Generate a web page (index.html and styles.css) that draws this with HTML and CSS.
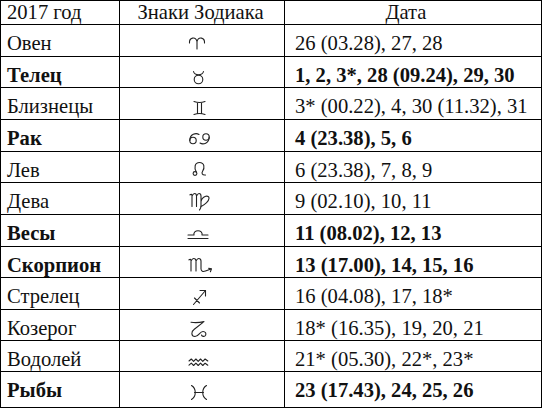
FILE: index.html
```html
<!DOCTYPE html>
<html lang="ru">
<head>
<meta charset="utf-8">
<link rel="stylesheet" href="styles.css">
</head>
<body>
<table class="zodiac">
  <colgroup>
    <col class="c-year">
    <col class="c-sign">
    <col class="c-date">
  </colgroup>
  <thead>
    <tr class="head">
      <th class="year">2017 год</th>
      <th class="signh">Знаки Зодиака</th>
      <th class="dateh">Дата</th>
    </tr>
  </thead>
  <tbody>
    <tr class="r32">
      <td class="name">Овен</td>
      <td class="sign"><svg viewBox="0 1 30 30" width="30" height="30"><path d="M5.5 19 C5 13.5 11.5 12 13 17.5 M20.5 19 C21 13.5 14.5 12 13 17.5 V25"/></svg></td>
      <td class="date">26 (03.28), 27, 28</td>
    </tr>
    <tr class="r31 bold">
      <td class="name">Телец</td>
      <td class="sign"><svg viewBox="0 1 30 30" width="30" height="30"><circle cx="14.5" cy="23.5" r="4.3"/><path d="M9.5 15.5 C10.5 19.8 18.5 19.8 19.5 15.5"/></svg></td>
      <td class="date">1, 2, 3*, 28 (09.24), 29, 30</td>
    </tr>
    <tr class="r32">
      <td class="name">Близнецы</td>
      <td class="sign"><svg viewBox="0 1 30 30" width="30" height="30"><path d="M10 14.5 Q15.5 16.5 21 14.5 M10 27.5 Q15.5 25.5 21 27.5 M13.5 15.5 V26.5 M17.5 15.5 V26.5"/></svg></td>
      <td class="date">3* (00.22), 4, 30 (11.32), 31</td>
    </tr>
    <tr class="r32 bold">
      <td class="name">Рак</td>
      <td class="sign"><svg viewBox="0 1 30 30" width="30" height="30"><circle cx="9" cy="21.5" r="3.2"/><path d="M5.8 21.5 C5.8 15 12 13.5 15 15.5"/><circle cx="22" cy="18" r="3.2"/><path d="M25.2 18 C25.2 24.5 19 26 16 24"/></svg></td>
      <td class="date">4 (23.38), 5, 6</td>
    </tr>
    <tr class="r31">
      <td class="name">Лев</td>
      <td class="sign"><svg viewBox="0 1 30 30" width="30" height="30"><circle cx="11" cy="22.5" r="1.9"/><path d="M12.3 21 C10 17 10.5 11.5 15.5 11.5 C20.5 11.5 21 17 18.5 20.5 C17.5 22 18 24.5 21.5 24"/></svg></td>
      <td class="date">6 (23.38), 7, 8, 9</td>
    </tr>
    <tr class="r32">
      <td class="name">Дева</td>
      <td class="sign"><svg viewBox="0 1 30 30" width="30" height="30"><path d="M6 12.8 Q7.6 11.6 8 13.5 V24.5 M8 14 Q9.4 11.5 10.5 11.5 Q12.5 11.5 12.5 14 V24.5 M12.5 14 Q14 11.5 15 11.5 Q17 11.5 17 14 V24 Q17 26.5 15.5 28 M17 19.5 C18.5 13.5 25.5 12.5 25 16.5 C24.5 20.5 20 23 16.5 25"/></svg></td>
      <td class="date">9 (02.10), 10, 11</td>
    </tr>
    <tr class="r32 bold">
      <td class="name">Весы</td>
      <td class="sign"><svg viewBox="0 1 30 30" width="30" height="30"><path d="M4 24.5 H24 M4 21 H10 C8.5 15.3 19.5 15.3 18 21 H24"/></svg></td>
      <td class="date">11 (08.02), 12, 13</td>
    </tr>
    <tr class="r31 bold">
      <td class="name">Скорпион</td>
      <td class="sign"><svg viewBox="0 1 30 30" width="30" height="30"><path d="M5 13.8 Q6.6 12.6 7 14.5 V25 M7 15 Q8.5 12.5 9.5 12.5 Q12 12.5 12 15 V25 M12 15 Q13.5 12.5 14.5 12.5 Q17 12.5 17 15 V23 Q17.5 26.5 21.5 25 L27 23 M24.6 22.3 L27.5 22.9 L26.4 25.8"/></svg></td>
      <td class="date">13 (17.00), 14, 15, 16</td>
    </tr>
    <tr class="r32">
      <td class="name">Стрелец</td>
      <td class="sign"><svg viewBox="0 1 30 30" width="30" height="30"><path d="M9.5 27.5 L21.5 13.5 M16 13.5 H21.5 V19 M10.5 21 L15.5 26"/></svg></td>
      <td class="date">16 (04.08), 17, 18*</td>
    </tr>
    <tr class="r31">
      <td class="name">Козерог</td>
      <td class="sign"><svg viewBox="0 1 30 30" width="30" height="30"><path d="M7 13.2 Q13 14.2 20 12.6 L10 20.5 C7 22.5 7 27.5 11 27.5 C15 27.5 15.5 22.5 19 22.5 C21.5 22.5 22.5 24.5 21.5 26.5 C20.5 28 18 27.5 17.5 26"/></svg></td>
      <td class="date">18* (16.35), 19, 20, 21</td>
    </tr>
    <tr class="r31">
      <td class="name">Водолей</td>
      <td class="sign"><svg viewBox="0 1 30 30" width="30" height="30"><path d="M5 21 L7.3 19 L9.6 21.3 L11.9 19 L14.2 21.3 L16.5 19 L18.8 21.3 L21.1 19 L23.8 21 M5 25.2 L7.3 23.2 L9.6 25.5 L11.9 23.2 L14.2 25.5 L16.5 23.2 L18.8 25.5 L21.1 23.2 L23.8 25.2"/></svg></td>
      <td class="date">21* (05.30), 22*, 23*</td>
    </tr>
    <tr class="r36 bold">
      <td class="name">Рыбы</td>
      <td class="sign"><svg viewBox="0 1 30 30" width="30" height="30"><path d="M7.5 14.5 C12.5 17.5 12.5 25.5 7.5 28.5 M22.5 14.5 C17.5 17.5 17.5 25.5 22.5 28.5 M10.5 21.5 H19.5"/></svg></td>
      <td class="date">23 (17.43), 24, 25, 26</td>
    </tr>
  </tbody>
</table>
</body>
</html>
```
FILE: styles.css
```css
html, body {
  margin: 0;
  padding: 0;
  background: #fff;
}

body {
  font-family: "Liberation Serif", "Times New Roman", serif;
  color: #111;
}

.zodiac {
  border-collapse: collapse;
  table-layout: fixed;
  width: 541px;
  font-size: 20.6px;
}

.c-year { width: 119px; }
.c-sign { width: 165px; }
.c-date { width: 257px; }

.zodiac th,
.zodiac td {
  border: 1px solid #000;
  padding: 0;
  vertical-align: top;
  line-height: 22px;
  white-space: nowrap;
}

.zodiac th {
  font-weight: normal;
}

.head { height: 24px; }
.r31 { height: 31px; }
.r32 { height: 32px; }
.r36 { height: 36px; }

.zodiac .year {
  text-align: left;
  padding-left: 6px;
}

.zodiac .signh {
  text-align: center;
  padding-right: 3px;
}

.zodiac .dateh {
  text-align: center;
  padding-right: 14px;
}

.zodiac .name {
  padding: 7px 0 0 6px;
}

.zodiac .bold .name,
.zodiac .bold .date {
  font-weight: bold;
}

.zodiac .date {
  padding: 7px 0 0 10px;
}

.zodiac .sign {
  padding-right: 7px;
}

.sign svg {
  display: block;
  margin: 0 auto;
  fill: none;
  stroke: #222;
  stroke-width: 1.1;
  stroke-linecap: round;
  stroke-linejoin: round;
}
```
